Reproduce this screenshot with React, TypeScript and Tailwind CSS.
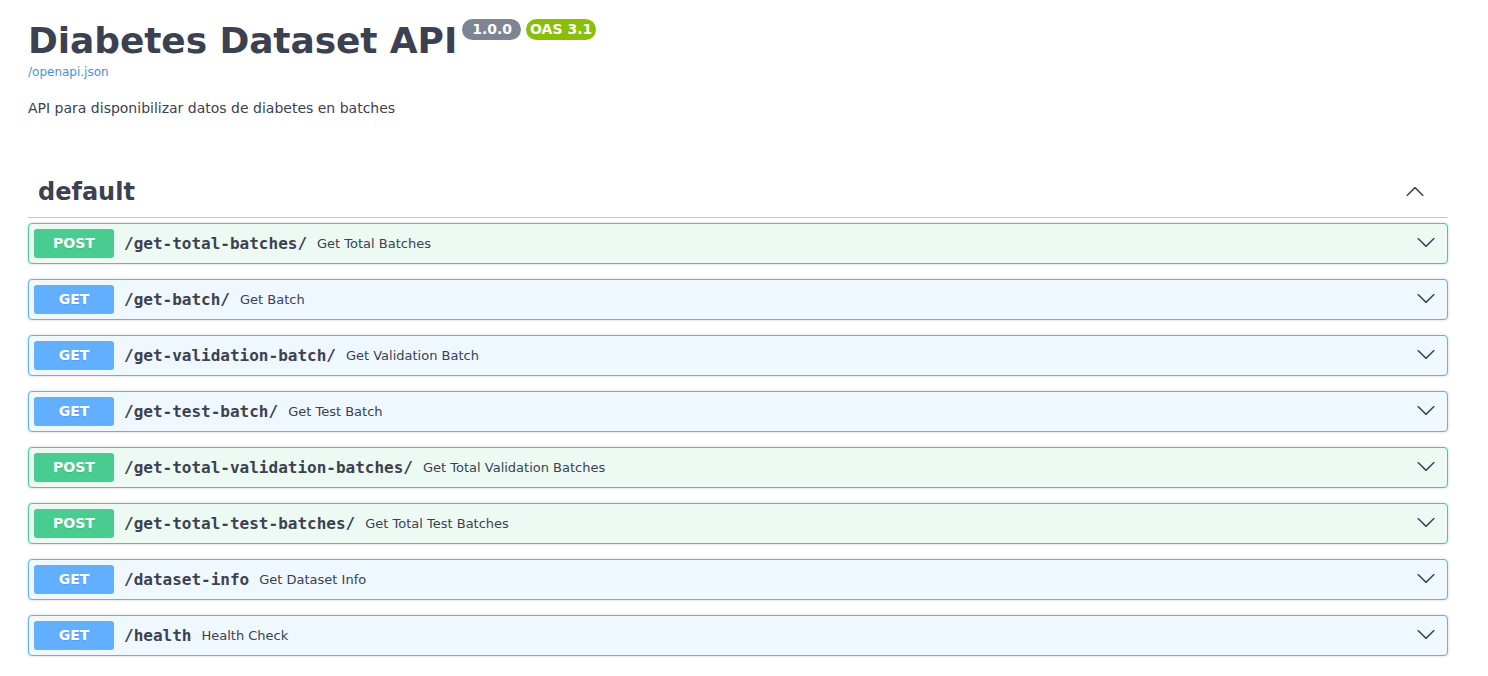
type Op = { method: 'GET' | 'POST'; path: string; summary: string };

const ops: Op[] = [
    { method: 'POST', path: '/get-total-batches/', summary: 'Get Total Batches' },
    { method: 'GET', path: '/get-batch/', summary: 'Get Batch' },
    { method: 'GET', path: '/get-validation-batch/', summary: 'Get Validation Batch' },
    { method: 'GET', path: '/get-test-batch/', summary: 'Get Test Batch' },
    { method: 'POST', path: '/get-total-validation-batches/', summary: 'Get Total Validation Batches' },
    { method: 'POST', path: '/get-total-test-batches/', summary: 'Get Total Test Batches' },
    { method: 'GET', path: '/dataset-info', summary: 'Get Dataset Info' },
    { method: 'GET', path: '/health', summary: 'Health Check' },
];

function ArrowDown() {
    return (
        <svg width="20" height="20" viewBox="0 0 20 20" className="fill-[#3b4151]">
            <path d="M17.418 6.109c.272-.268.709-.268.979 0s.271.701 0 .969l-7.908 7.83c-.27.268-.707.268-.979 0l-7.908-7.83c-.27-.268-.27-.701 0-.969.271-.268.709-.268.979 0L10 13.25l7.418-7.141z" />
        </svg>
    );
}

function ArrowUp() {
    return (
        <svg width="20" height="20" viewBox="0 0 20 20" className="fill-[#3b4151]">
            <path d="M17.418 14.908c.272.268.709.268.979 0s.271-.701 0-.969l-7.908-7.83c-.27-.268-.707-.268-.979 0l-7.908 7.83c-.27.268-.27.701 0 .969.271.268.709.268.979 0L10 7.767l7.418 7.141z" />
        </svg>
    );
}

function OpRow({ op }: { op: Op }) {
    const post = op.method === 'POST';
    return (
        <div
            className={
                post
                    ? 'flex items-center p-[5px] mb-[15px] rounded-[4px] border border-[#49cc90] bg-[#edfaf4] shadow-[0_0_3px_rgba(0,0,0,0.19)]'
                    : 'flex items-center p-[5px] mb-[15px] rounded-[4px] border border-[#61affe] bg-[#eff7ff] shadow-[0_0_3px_rgba(0,0,0,0.19)]'
            }
        >
            <div
                className={
                    post
                        ? 'w-[80px] h-[29px] rounded-[3px] bg-[#49cc90] text-white text-[14px] font-bold flex items-center justify-center [text-shadow:0_1px_0_rgba(0,0,0,0.1)]'
                        : 'w-[80px] h-[29px] rounded-[3px] bg-[#61affe] text-white text-[14px] font-bold flex items-center justify-center [text-shadow:0_1px_0_rgba(0,0,0,0.1)]'
                }
            >
                {op.method}
            </div>
            <span className="ml-[10px] text-[16px] font-bold text-[#3b4151] font-['DejaVu_Sans_Mono',monospace]">
                {op.path}
            </span>
            <span className="ml-[10px] text-[13px] text-[#3b4151]">{op.summary}</span>
            <div className="flex-1" />
            <div className="mr-[6px] mb-[4px] flex items-center">
                <ArrowDown />
            </div>
        </div>
    );
}

export default function App() {
    return (
        <div className="w-full min-h-screen bg-white font-['DejaVu_Sans',sans-serif] text-[#3b4151] px-[28px] pt-[19px]">
            {/* Info */}
            <div className="flex items-start">
                <h2 className="text-[36px] leading-[43px] font-bold tracking-[-0.1px] text-[#3b4151]">Diabetes Dataset API</h2>
                <span className="ml-[5px] h-[21px] pl-[10px] pr-[9px] rounded-full bg-[#7d8492] text-white text-[14px] font-bold leading-[21px]">
                    1.0.0
                </span>
                <span className="ml-[5px] h-[21px] px-[4px] rounded-full bg-[#89bf04] text-white text-[14px] font-bold leading-[21px]">
                    OAS 3.1
                </span>
            </div>
            <div className="mt-[2px] text-[12px] leading-[16px] text-[#4990e2]">/openapi.json</div>
            <p className="mt-[18px] text-[14px] leading-[20px] text-[#3b4151]">
                API para disponibilizar datos de diabetes en batches
            </p>

            {/* Tag section */}
            <div className="w-[1420px] mt-[58px]">
                <div className="flex items-center pl-[10px] pr-[23px] pb-[9px] border-b border-[#c4c6cb]">
                    <h3 className="text-[24px] leading-[32px] font-bold text-[#3b4151]">default</h3>
                    <div className="flex-1" />
                    <div className="mb-[3px] flex items-center">
                        <ArrowUp />
                    </div>
                </div>
                <div className="mt-[5px]">
                    {ops.map((op) => (
                        <OpRow key={op.path} op={op} />
                    ))}
                </div>
            </div>
        </div>
    );
}
